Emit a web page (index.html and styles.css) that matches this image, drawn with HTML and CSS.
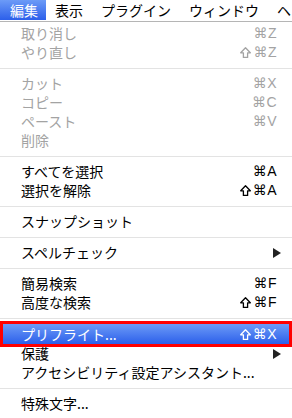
FILE: index.html
```html
<!DOCTYPE html>
<html lang="ja">
<head>
<meta charset="UTF-8" />
<meta name="viewport" content="width=device-width, initial-scale=1" />
<title>編集メニュー</title>
<link rel="stylesheet" href="styles.css">
</head>
<body>
  <div class="menubar">
    <span class="title active">編集</span>
    <span class="title">表示</span>
    <span class="title">プラグイン</span>
    <span class="title">ウィンドウ</span>
    <span class="title">ヘ</span>
  </div>

  <ul class="menu">
    <li class="item disabled"><span class="label">取り消し</span><span class="key">⌘Z</span></li>
    <li class="item disabled"><span class="label">やり直し</span>
      <span class="key"><svg class="shift" width="11" height="11" viewBox="0 0 11 11"><polygon points="5.5,0.8 10.3,5.8 7.6,5.8 7.6,10.4 3.4,10.4 3.4,5.8 0.7,5.8" /></svg>⌘Z</span></li>
    <li class="sep"></li>
    <li class="item disabled"><span class="label">カット</span><span class="key">⌘X</span></li>
    <li class="item disabled"><span class="label">コピー</span><span class="key">⌘C</span></li>
    <li class="item disabled"><span class="label">ペースト</span><span class="key">⌘V</span></li>
    <li class="item disabled"><span class="label">削除</span></li>
    <li class="sep"></li>
    <li class="item"><span class="label">すべてを選択</span><span class="key">⌘A</span></li>
    <li class="item"><span class="label">選択を解除</span>
      <span class="key"><svg class="shift" width="11" height="11" viewBox="0 0 11 11"><polygon points="5.5,0.8 10.3,5.8 7.6,5.8 7.6,10.4 3.4,10.4 3.4,5.8 0.7,5.8" /></svg>⌘A</span></li>
    <li class="sep"></li>
    <li class="item"><span class="label">スナップショット</span></li>
    <li class="sep"></li>
    <li class="item submenu"><span class="label">スペルチェック</span>
      <svg class="arrow" width="8" height="10" viewBox="0 0 8 10"><polygon points="0,0 8,5 0,10" /></svg>
    </li>
    <li class="sep"></li>
    <li class="item"><span class="label">簡易検索</span><span class="key">⌘F</span></li>
    <li class="item"><span class="label">高度な検索</span>
      <span class="key"><svg class="shift" width="11" height="11" viewBox="0 0 11 11"><polygon points="5.5,0.8 10.3,5.8 7.6,5.8 7.6,10.4 3.4,10.4 3.4,5.8 0.7,5.8" /></svg>⌘F</span></li>
    <li class="sep"></li>
    <li class="item selected"><span class="label">プリフライト...</span>
      <span class="key"><svg class="shift" width="11" height="11" viewBox="0 0 11 11"><polygon points="5.5,0.8 10.3,5.8 7.6,5.8 7.6,10.4 3.4,10.4 3.4,5.8 0.7,5.8" /></svg>⌘X</span></li>
    <li class="item submenu"><span class="label">保護</span>
      <svg class="arrow" width="8" height="10" viewBox="0 0 8 10"><polygon points="0,0 8,5 0,10" /></svg>
    </li>
    <li class="item"><span class="label">アクセシビリティ設定アシスタント...</span></li>
    <li class="sep"></li>
    <li class="item"><span class="label">特殊文字...</span></li>
  </ul>
</body>
</html>
```

FILE: styles.css
```css
/* Base */
* {
  box-sizing: border-box;
}
body {
  margin: 0;
  background: #fff;
  font-family: "Noto Sans CJK JP", "Noto Sans", sans-serif;
  font-size: 14px;
  color: #000;
  overflow: hidden;
}

/* Menu bar */
.menubar {
  display: flex;
  height: 22px;
  border-bottom: 1px solid #b5b5b5;
  background: #fff;
  white-space: nowrap;
}
.title {
  height: 20px;
  line-height: 20px;
  padding: 0 9px;
}
.title:first-child {
  padding-left: 10px;
  padding-right: 8px;
}
.title.active {
  background: linear-gradient(#6c9bf7, #2c5fea);
  color: #fff;
}

/* Dropdown */
.menu {
  list-style: none;
  margin: 0;
  padding: 2px 0 0;
}
.item {
  display: flex;
  align-items: center;
  justify-content: space-between;
  height: 19px;
  line-height: 19px;
  padding: 0 15px 0 21px;
  white-space: nowrap;
}
.item.disabled {
  color: #a3a3a3;
}
.key {
  display: flex;
  align-items: center;
  font-family: "Liberation Sans", "DejaVu Sans", sans-serif;
  font-size: 14px;
  letter-spacing: 0.5px;
}
.shift {
  margin-right: 2px;
  fill: none;
  stroke: currentColor;
  stroke-width: 1.3;
  stroke-linejoin: round;
}
.item.submenu {
  padding-right: 11px;
}
.arrow {
  display: block;
  fill: #222;
}
.item.selected {
  height: 26px;
  margin: -3px 0;
  padding: 0 12px 0 18px;
  border: 3px solid #f00;
  background: linear-gradient(#6c9bf7, #2c5fea);
  color: #fff;
}
.sep {
  height: 12px;
  display: flex;
  align-items: center;
}
.sep::before {
  content: "";
  flex: 1;
  height: 1px;
  background: #e3e3e3;
}
```
